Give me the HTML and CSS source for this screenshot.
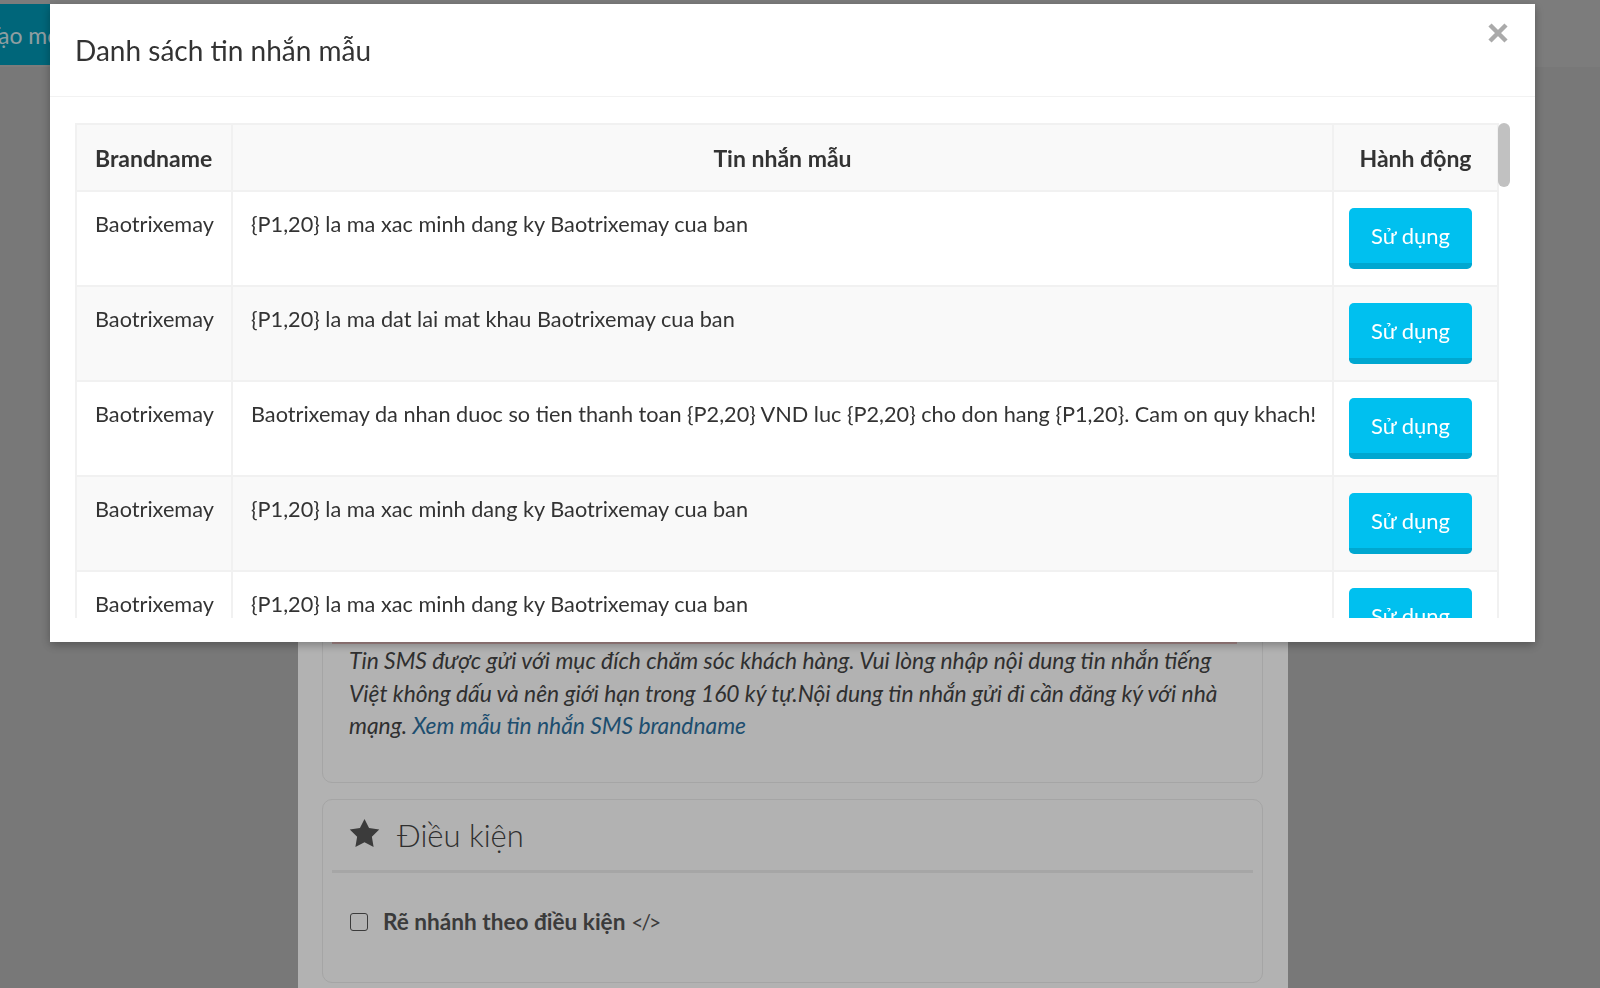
FILE: index.html
```html
<!DOCTYPE html>
<html lang="vi">
<head>
    <meta charset="UTF-8">
    <meta name="viewport" content="width=device-width, initial-scale=1.0">
    <title>Danh sách tin nhắn mẫu</title>
    <link rel="stylesheet" href="styles.css">
</head>
<body>
    <header class="topbar">
        <button class="btn-create">Tạo mới</button>
    </header>

    <div class="page-body">
        <main class="panel">
            <section class="card">
                <div class="card-head">
                    <svg class="head-icon" viewBox="0 0 100 95"><polygon points="50,2 64.69,31.77 97.55,36.55 73.78,59.73 79.39,92.45 50,77 20.61,92.45 26.22,59.73 2.45,36.55 35.31,31.77"/></svg>
                    <h3>Nội dung tin nhắn</h3>
                </div>
                <div class="card-body">
                    <div class="sms-input"></div>
                    <p class="hint">Tin SMS được gửi với mục đích chăm sóc khách hàng. Vui lòng nhập nội dung tin nhắn tiếng Việt không dấu và nên giới hạn trong 160 ký tự.Nội dung tin nhắn gửi đi cần đăng ký với nhà mạng. <a href="#">Xem mẫu tin nhắn SMS brandname</a></p>
                </div>
            </section>

            <section class="card">
                <div class="card-head">
                    <svg class="head-icon" viewBox="0 0 100 95"><polygon points="50,2 64.69,31.77 97.55,36.55 73.78,59.73 79.39,92.45 50,77 20.61,92.45 26.22,59.73 2.45,36.55 35.31,31.77"/></svg>
                    <h3>Điều kiện</h3>
                </div>
                <div class="card-body card-body-check">
                    <label class="check"><input type="checkbox"> <span><b>Rẽ nhánh theo điều kiện</b> <code>&lt;/&gt;</code></span></label>
                </div>
            </section>
        </main>
    </div>

    <div class="modal-backdrop"></div>
    <div class="modal">
        <div class="modal-header">
            <h4 class="modal-title">Danh sách tin nhắn mẫu</h4>
            <button class="modal-close" aria-label="Đóng">
                <svg viewBox="0 0 20 20"><path d="M2 2L18 18M18 2L2 18"/></svg>
            </button>
        </div>
        <div class="modal-body">
            <div class="table-scroll">
                <table class="tpl-table">
                    <colgroup>
                        <col class="col-brand">
                        <col class="col-msg">
                        <col class="col-action">
                    </colgroup>
                    <thead>
                        <tr>
                            <th>Brandname</th>
                            <th class="center">Tin nhắn mẫu</th>
                            <th class="center">Hành động</th>
                        </tr>
                    </thead>
                    <tbody id="tplList"></tbody>
                </table>
            </div>
            <div class="scroll-thumb"></div>
        </div>
    </div>

    <script>
        const tplListElement = document.getElementById('tplList');

        const templates = [
            '{P1,20} la ma xac minh dang ky Baotrixemay cua ban',
            '{P1,20} la ma dat lai mat khau Baotrixemay cua ban',
            'Baotrixemay da nhan duoc so tien thanh toan {P2,20} VND luc {P2,20} cho don hang {P1,20}. Cam on quy khach!',
            '{P1,20} la ma xac minh dang ky Baotrixemay cua ban',
            '{P1,20} la ma xac minh dang ky Baotrixemay cua ban'
        ];

        function loadTemplates() {
            tplListElement.innerHTML = '';
            // danh sach dai, lap lai cac mau
            for (let i = 0; i < 40; i++) {
                const tr = document.createElement('tr');
                tr.innerHTML = `
                    <td>Baotrixemay</td>
                    <td>${templates[i % templates.length]}</td>
                    <td class="action"><button class="btn-use">Sử dụng</button></td>
                `;
                tplListElement.appendChild(tr);
            }
        }

        loadTemplates();
    </script>
</body>
</html>
```

FILE: styles.css
```css
html, body {
    margin: 0;
    height: 100%;
}
body {
    font-family: "Lato", "Noto Sans", sans-serif;
    background-color: #acacac;
    color: #333;
    overflow: hidden;
}
.topbar {
    height: 67px;
    padding-top: 4px;
    box-sizing: border-box;
    background-color: #b2b2b2;
    display: flex;
    align-items: flex-start;
}
.btn-create {
    height: 61px;
    margin-left: -33px;
    padding: 0 20px;
    border: none;
    border-radius: 0 4px 4px 0;
    background-color: #0093af;
    color: #cfe2e7;
    font-family: "Lato", sans-serif;
    font-size: 23px;
}
.page-body {
    display: flex;
    padding-left: 298px;
}
.panel {
    width: 990px;
    min-height: calc(100vh - 67px);
    box-sizing: border-box;
    padding: 18px 25px 0 24px;
    background-color: #fff;
}
.card {
    border: 1px solid #ececec;
    border-radius: 10px;
    margin-bottom: 16px;
}
.card-head {
    height: 73px;
    box-sizing: border-box;
    margin: 0 9px;
    padding: 0 17px;
    border-bottom: 3px solid #eee;
    display: flex;
    align-items: center;
    gap: 17px;
}
.card-head h3 {
    margin: 0;
    font-size: 31px;
    font-weight: 300;
    color: #444;
}
.head-icon {
    width: 31px;
    height: 30px;
    margin-top: -3px;
    fill: #555;
}
.card-body {
    padding: 30px 27px 40px 26px;
}
.sms-input {
    height: 455px;
    width: 905px;
    margin-left: -17px;
    box-sizing: border-box;
    border-bottom: 2px solid #efc3c3;
}
.hint {
    margin: 0;
    font-size: 22.8px;
    font-style: italic;
    line-height: 32.5px;
    color: #444;
}
.hint a {
    color: #2c70a0;
    text-decoration: none;
}
.card-body-check {
    padding-bottom: 41px;
}
.check {
    height: 38px;
    display: flex;
    align-items: center;
    gap: 15px;
    font-size: 22.6px;
    color: #555;
}
.check code {
    font-family: "Lato", sans-serif;
    font-size: 21px;
    letter-spacing: -2px;
}
.check input {
    appearance: none;
    width: 18px;
    height: 18px;
    margin: 0 0 0 1px;
    border: 1.5px solid #555;
    border-radius: 3px;
    background-color: #fff;
}

/* modal */
.modal-backdrop {
    position: fixed;
    inset: 0;
    background-color: rgba(0,0,0,0.3);
}
.modal {
    position: fixed;
    top: 4px;
    left: 50px;
    width: 1485px;
    background-color: #fff;
    box-shadow: 0 3px 9px rgba(0,0,0,0.3);
}
.modal-header {
    height: 93px;
    box-sizing: border-box;
    padding: 0 27px 0 25px;
    border-bottom: 1px solid #f2f2f2;
    display: flex;
    align-items: center;
    justify-content: space-between;
}
.modal-title {
    margin: 0;
    font-size: 28px;
    font-weight: 400;
    color: #333;
}
.modal-close {
    align-self: flex-start;
    margin-top: 19px;
    width: 20px;
    height: 20px;
    padding: 0;
    border: none;
    background: none;
    cursor: pointer;
}
.modal-close svg {
    display: block;
    width: 20px;
    height: 20px;
    stroke: #aaa;
    stroke-width: 4.5;
}
.modal-body {
    position: relative;
    padding: 26px 25px 24px;
}
.table-scroll {
    height: 495px;
    overflow-y: auto;
    scrollbar-width: none;
}
.scroll-thumb {
    position: absolute;
    top: 26px;
    right: 25px;
    width: 12px;
    height: 64px;
    border-radius: 6px;
    background-color: #c1c1c1;
}
.tpl-table {
    width: 1422px;
    table-layout: fixed;
    border-collapse: collapse;
}
.col-brand { width: 156px; }
.col-msg { width: 1101px; }
.col-action { width: 165px; }
.tpl-table th, .tpl-table td {
    border: 2px solid #f1f1f1;
}
.tpl-table th {
    height: 65px;
    padding: 0 18px;
    font-size: 23px;
    font-weight: 700;
    text-align: left;
    background-color: #f9f9f9;
}
.tpl-table th.center {
    text-align: center;
}
.tpl-table td {
    padding: 16px 18px;
    vertical-align: top;
    font-size: 21.7px;
    line-height: 32px;
    white-space: nowrap;
}
.tpl-table td.action {
    padding-left: 15px;
}
.tpl-table tbody tr:nth-child(even) {
    background-color: #f9f9f9;
}
.btn-use {
    width: 123px;
    height: 61px;
    box-sizing: border-box;
    display: flex;
    align-items: center;
    justify-content: center;
    border: none;
    border-bottom: 6px solid #00a7d0;
    border-radius: 5px;
    background-color: #00c0ef;
    color: #fff;
    font-family: "Lato", sans-serif;
    font-size: 22px;
    cursor: pointer;
}
```
